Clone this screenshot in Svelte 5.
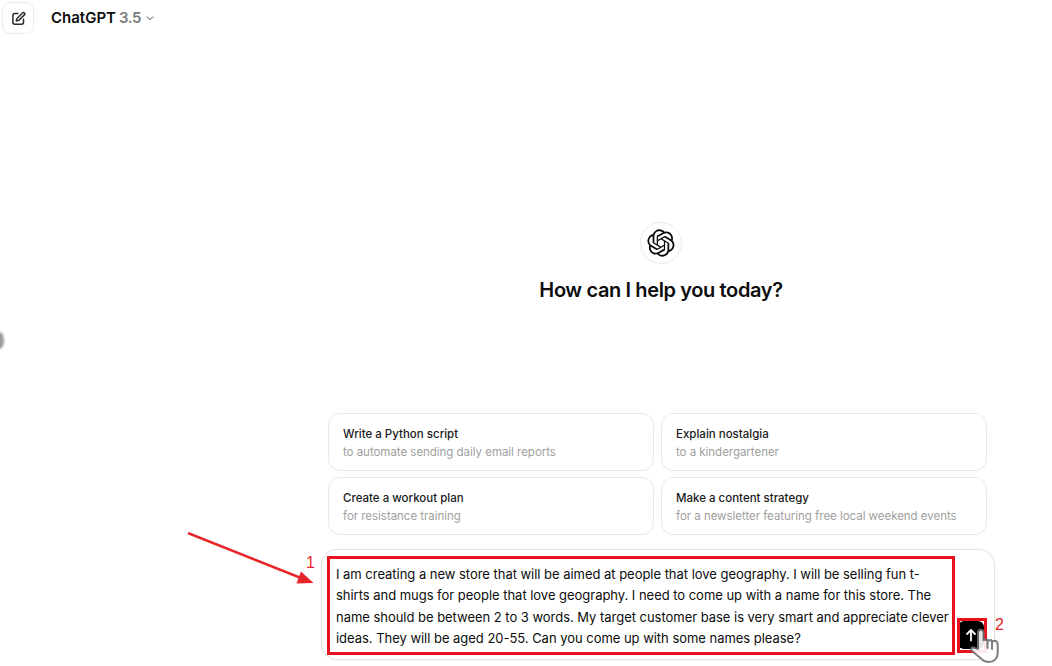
<script>
  const starters = [
    { title: "Write a Python script", sub: "to automate sending daily email reports" },
    { title: "Explain nostalgia", sub: "to a kindergartener" },
    { title: "Create a workout plan", sub: "for resistance training" },
    { title: "Make a content strategy", sub: "for a newsletter featuring free local weekend events" }
  ];
  const promptLines = [
    "I am creating a new store that will be aimed at people that love geography. I will be selling fun t-",
    "shirts and mugs for people that love geography. I need to come up with a name for this store. The",
    "name should be between 2 to 3 words. My target customer base is very smart and appreciate clever",
    "ideas. They will be aged 20-55. Can you come up with some names please?"
  ];
</script>

<div class="page">
  <div class="handle"></div>

  <header class="topbar">
    <button class="new-chat" aria-label="New chat">
      <svg width="15" height="15" viewBox="0 0 24 24" fill="none" stroke="#2a2a2a" stroke-width="2.4" stroke-linecap="round" stroke-linejoin="round">
        <path d="M11 4H6a3 3 0 0 0-3 3v11a3 3 0 0 0 3 3h11a3 3 0 0 0 3-3v-5" />
        <path d="M18.4 3.2a2.1 2.1 0 0 1 3 3L12.5 15l-4 1 1-4z" />
      </svg>
    </button>
    <div class="model">
      <span class="name">ChatGPT</span>
      <span class="version">3.5</span>
      <svg width="10" height="10" viewBox="0 0 10 10" fill="none" stroke="#9a9a9a" stroke-width="1.3" stroke-linecap="round" stroke-linejoin="round">
        <path d="M2 4l3 2.6L8 4" />
      </svg>
    </div>
  </header>

  <main class="hero">
    <div class="logo">
      <svg width="28" height="28" viewBox="0 0 41 41" fill="#0d0d0d">
        <path d="M37.5324 16.8707C37.9808 15.5241 38.1363 14.0974 37.9886 12.6859C37.8409 11.2744 37.3934 9.91076 36.676 8.68622C35.6126 6.83404 33.9882 5.3676 32.0373 4.4985C30.0864 3.62941 27.9098 3.40259 25.8215 3.85078C24.8796 2.7893 23.7219 1.94125 22.4257 1.36341C21.1295 0.785575 19.7249 0.491269 18.3058 0.500197C16.1708 0.495044 14.0893 1.16803 12.3614 2.42214C10.6335 3.67624 9.34853 5.44666 8.6917 7.47815C7.30085 7.76286 5.98686 8.3414 4.8377 9.17505C3.68854 10.0087 2.73073 11.0782 2.02839 12.312C0.956464 14.1591 0.498905 16.2988 0.721698 18.4228C0.944492 20.5467 1.83612 22.5449 3.268 24.1293C2.81966 25.4759 2.66413 26.9026 2.81182 28.3141C2.95951 29.7256 3.40701 31.0892 4.12437 32.3138C5.18791 34.1659 6.8123 35.6322 8.76321 36.5013C10.7141 37.3704 12.8907 37.5973 14.9789 37.1492C15.9208 38.2107 17.0786 39.0587 18.3747 39.6366C19.6709 40.2144 21.0755 40.5087 22.4946 40.4998C24.6307 40.5054 26.7133 39.8321 28.4418 38.5772C30.1704 37.3223 31.4556 35.5506 32.1119 33.5179C33.5027 33.2332 34.8167 32.6547 35.9659 31.821C37.115 30.9874 38.0728 29.9178 38.7752 28.684C39.8458 26.8371 40.3023 24.6979 40.0789 22.5748C39.8556 20.4517 38.9639 18.4544 37.5324 16.8707ZM22.4978 37.8849C20.7443 37.8874 19.0459 37.2733 17.6994 36.1501C17.7601 36.117 17.8666 36.0586 17.936 36.0161L25.9004 31.4156C26.1003 31.3019 26.2663 31.137 26.3813 30.9378C26.4964 30.7386 26.5563 30.5124 26.5549 30.2825V19.0542L29.9213 20.998C29.9389 21.0068 29.9541 21.0198 29.9656 21.0359C29.977 21.052 29.9842 21.0707 29.9867 21.0902V30.3889C29.9842 32.375 29.1946 34.2791 27.7909 35.6841C26.3872 37.0892 24.4838 37.8806 22.4978 37.8849ZM6.39227 31.0064C5.51397 29.4888 5.19742 27.7107 5.49804 25.9832C5.55718 26.0187 5.66048 26.0818 5.73461 26.1244L13.699 30.7248C13.8975 30.8408 14.1233 30.902 14.3532 30.902C14.583 30.902 14.8088 30.8408 15.0073 30.7248L24.731 25.1103V28.9979C24.7321 29.0177 24.7283 29.0376 24.7199 29.0556C24.7115 29.0736 24.6988 29.0893 24.6829 29.1012L16.6317 33.7497C14.9096 34.7416 12.8643 35.0097 10.9447 34.4954C9.02506 33.9811 7.38785 32.7263 6.39227 31.0064ZM4.29707 13.6194C5.17156 12.0998 6.55279 10.9364 8.19885 10.3327C8.19885 10.4013 8.19491 10.5228 8.19491 10.6071V19.808C8.19351 20.0378 8.25334 20.2638 8.36823 20.4629C8.48312 20.6619 8.64893 20.8267 8.84863 20.9404L18.5723 26.5542L15.206 28.4979C15.1894 28.5089 15.1703 28.5155 15.1505 28.5173C15.1307 28.5191 15.1107 28.516 15.0924 28.5082L7.04046 23.8557C5.32135 22.8601 4.06716 21.2235 3.55289 19.3046C3.03862 17.3858 3.30624 15.3413 4.29707 13.6194ZM31.955 20.0556L22.2312 14.4411L25.5976 12.4981C25.6142 12.4872 25.6333 12.4805 25.6531 12.4787C25.6729 12.4769 25.6928 12.4801 25.7111 12.4879L33.7631 17.1364C34.9967 17.849 36.0017 18.8982 36.6606 20.1613C37.3194 21.4244 37.6047 22.849 37.4832 24.2684C37.3617 25.6878 36.8382 27.0432 35.9743 28.1759C35.1103 29.3086 33.9415 30.1717 32.6047 30.6641C32.6047 30.5947 32.6047 30.4733 32.6047 30.3889V21.188C32.6066 20.9586 32.5474 20.7328 32.4332 20.5338C32.319 20.3348 32.154 20.1698 31.955 20.0556ZM35.3055 15.0128C35.2464 14.9765 35.1431 14.9142 35.069 14.8717L27.1045 10.2712C26.906 10.1554 26.6803 10.0943 26.4504 10.0943C26.2206 10.0943 25.9948 10.1554 25.7963 10.2712L16.0726 15.8858V11.9982C16.0715 11.9783 16.0753 11.9585 16.0837 11.9405C16.0921 11.9225 16.1048 11.9068 16.1207 11.8949L24.1719 7.25025C25.4053 6.53903 26.8158 6.19376 28.2383 6.25482C29.6608 6.31589 31.0364 6.78077 32.2044 7.59508C33.3723 8.40939 34.2842 9.53945 34.8334 10.8531C35.3826 12.1667 35.5464 13.6095 35.3055 15.0128ZM14.2424 21.9419L10.8752 19.9981C10.8576 19.9893 10.8423 19.9763 10.8309 19.9602C10.8195 19.9441 10.8122 19.9254 10.8098 19.9058V10.6071C10.8107 9.18295 11.2173 7.78848 11.9819 6.58696C12.7466 5.38544 13.8377 4.42659 15.1275 3.82264C16.4173 3.21869 17.8524 2.99464 19.2649 3.1767C20.6775 3.35876 22.0089 3.93941 23.1034 4.85067C23.0427 4.88379 22.937 4.94215 22.8668 4.98473L14.9024 9.58517C14.7025 9.69878 14.5366 9.86356 14.4215 10.0626C14.3065 10.2616 14.2466 10.4877 14.2479 10.7175L14.2424 21.9419ZM16.071 17.9991L20.4018 15.4978L24.7325 17.9975V22.9985L20.4018 25.4983L16.071 22.9985V17.9991Z" />
      </svg>
    </div>
    <h1>How can I help you today?</h1>
  </main>

  <section class="starters">
    {#each starters as s}
      <div class="card">
        <div class="card-title">{s.title}</div>
        <div class="card-sub">{s.sub}</div>
      </div>
    {/each}
  </section>

  <section class="composer">
    <div class="prompt">
      {#each promptLines as line}
        <div>{line}</div>
      {/each}
    </div>
    <button class="send" aria-label="Send">
      <svg width="14" height="14" viewBox="0 0 14 14" fill="none" stroke="#fff" stroke-width="1.8" stroke-linecap="round" stroke-linejoin="round">
        <path d="M7 12.5V2M3 6l4-4 4 4" />
      </svg>
    </button>
  </section>

  <!-- red markup drawn on top of the screenshot -->
  <div class="mark mark-prompt"></div>
  <div class="mark mark-send"></div>
  <span class="num num-1">1</span>
  <span class="num num-2">2</span>
  <svg class="arrow" width="140" height="64" viewBox="0 0 140 64">
    <path d="M1 1L114 46" stroke="#e8262a" stroke-width="2.5" fill="none" />
    <path d="M126.5 51L109.5 51.5L114 39.5z" fill="#e8262a" />
  </svg>

  <svg class="hand" width="32" height="36" viewBox="0 0 32 36" fill="#fff" stroke="#6f7174" stroke-width="2" stroke-linejoin="round" stroke-linecap="round">
    <path d="M10 21V4.5a2.8 2.8 0 0 1 5.6 0V12l3.4-.6 1 1.4 3-.8 1.2 1.4 2.6-.6c1.6 0 2.9 1.6 2.9 3.6V25c0 5-3.4 9-8.5 9-4.2 0-6.5-1.2-8.5-3.8L3.500 22.500c-1.300-1.800.9-4 2.800-2.600z" />
    <path d="M19.500 12v8M24 13v8" />
  </svg>
</div>

<style>
  :global(body) {
    background: #fff;
  }
  .page {
    position: relative;
    width: 1052px;
    height: 666px;
    overflow: hidden;
    display: flex;
    flex-direction: column;
    background: #fff;
    font-family: Inter, "Liberation Sans", sans-serif;
    color: #0d0d0d;
  }
  .handle {
    position: absolute;
    left: -5px;
    top: 332px;
    width: 9px;
    height: 17px;
    border-radius: 50%;
    background: #999;
    filter: blur(1px);
  }
  .topbar {
    display: flex;
    align-items: center;
    gap: 17px;
    padding: 2px 0 0 2px;
    height: 32px;
  }
  .new-chat {
    width: 32px;
    height: 32px;
    padding: 0;
    display: flex;
    align-items: center;
    justify-content: center;
    background: #fff;
    border: 1px solid #ececec;
    border-radius: 8px;
  }
  .model {
    display: flex;
    align-items: center;
    gap: 3px;
    font-size: 15px;
    font-weight: 600;
    margin-top: -1px;
  }
  .version {
    color: #7b7b7b;
    letter-spacing: -0.4px;
    margin-right: 1px;
  }
  .hero {
    display: flex;
    flex-direction: column;
    align-items: center;
    margin: 188px 0 0 270px;
    width: 782px;
  }
  .logo {
    width: 42px;
    height: 42px;
    display: flex;
    align-items: center;
    justify-content: center;
    border: 1px solid #ececec;
    border-radius: 50%;
    box-sizing: border-box;
  }
  h1 {
    margin: 12px 0 0;
    font-size: 20px;
    line-height: 28px;
    font-weight: 600;
    letter-spacing: -0.38px;
  }
  .starters {
    display: grid;
    grid-template-columns: 326px 326px;
    grid-auto-rows: 58px;
    gap: 6px 7px;
    margin: 109px 0 0 328px;
  }
  .card {
    box-sizing: border-box;
    padding: 11px 14px;
    border: 1px solid #e9e9e9;
    border-radius: 12px;
    font-size: 11.5px;
    line-height: 18px;
    white-space: nowrap;
  }
  .card-title {
    font-weight: 500;
    color: #1a1a1a;
  }
  .card-sub {
    color: #a0a0a0;
    letter-spacing: -0.03px;
  }
  .composer {
    box-sizing: border-box;
    width: 674px;
    height: 111px;
    margin: 14px 0 0 321px;
    padding: 14px 0 0 14px;
    border: 1px solid #e3e3e3;
    box-shadow: 0 0 2px rgba(0, 0, 0, 0.08);
    border-radius: 16px;
    position: relative;
  }
  .prompt {
    font-size: 13px;
    line-height: 21.4px;
    letter-spacing: -0.03px;
    white-space: nowrap;
    color: #0d0d0d;
  }
  .send {
    position: absolute;
    left: 636px;
    top: 71px;
    width: 26px;
    height: 28px;
    padding: 0;
    display: flex;
    align-items: center;
    justify-content: center;
    background: #000;
    border: 0;
    border-radius: 6px;
  }
  .mark {
    position: absolute;
    box-sizing: border-box;
    border: 3px solid #e8121f;
  }
  .mark-prompt {
    left: 327px;
    top: 556px;
    width: 628px;
    height: 99px;
  }
  .mark-send {
    left: 957px;
    top: 618px;
    width: 30px;
    height: 35px;
  }
  .num {
    position: absolute;
    color: #e8262a;
    font-size: 16px;
    line-height: 18px;
    font-family: "Liberation Sans", sans-serif;
  }
  .num-1 {
    left: 306px;
    top: 554px;
  }
  .num-2 {
    left: 995px;
    top: 616px;
  }
  .arrow {
    position: absolute;
    left: 187px;
    top: 532px;
  }
  .hand {
    position: absolute;
    left: 968px;
    top: 628px;
    opacity: 0.9;
  }
</style>
